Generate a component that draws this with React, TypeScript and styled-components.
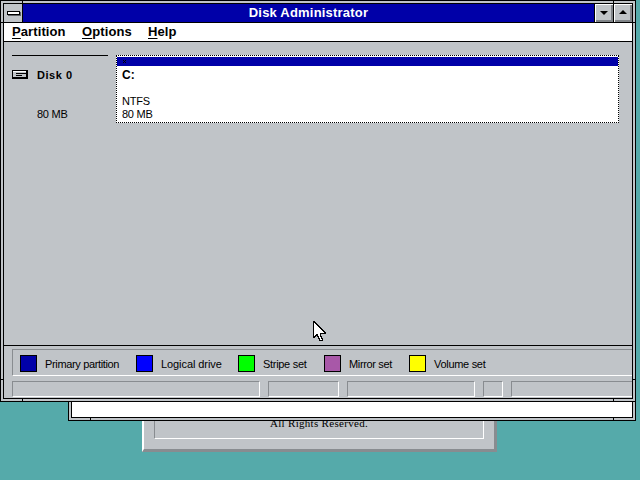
import React from "react";
import styled, { createGlobalStyle } from "styled-components";

const Global = createGlobalStyle`
  html, body { margin: 0; padding: 0; background: #55aaaa; }
  body { font-family: "Liberation Sans", Arial, sans-serif; }
  * { box-sizing: border-box; }
`;

const Desktop = styled.div`
  position: relative;
  width: 640px;
  height: 480px;
  overflow: hidden;
  background: #55aaaa;
`;

const AboutDialog = styled.div`
  position: absolute;
  left: 142px;
  top: 300px;
  width: 355px;
  height: 152px;
  background: #c0c4c8;
  border-left: 2px solid #fff;
  border-top: 2px solid #fff;
  border-right: 3px solid #888c90;
  border-bottom: 3px solid #888c90;
  padding: 10px;
`;

const AboutGroove = styled.div`
  height: 100%;
  border-left: 1px solid #888c90;
  border-top: 1px solid #888c90;
  border-right: 1px solid #fff;
  border-bottom: 1px solid #fff;
  display: flex;
  flex-direction: column;
  justify-content: flex-end;
  align-items: center;
  padding-bottom: 8px;
`;

const AboutText = styled.div`
  font: 11px/13px "Liberation Serif", serif;
  color: #000;
  white-space: nowrap;
  letter-spacing: 0.3px;
`;

const Frame = styled.div<{ $left: number; $top: number; $width: number; $height: number }>`
  position: absolute;
  left: ${(p) => p.$left}px;
  top: ${(p) => p.$top}px;
  width: ${(p) => p.$width}px;
  height: ${(p) => p.$height}px;
  border: 1px solid #000;
  padding: 2px;
  background: #c0c4c8;
`;

const FrameInner = styled.div`
  height: 100%;
  border: 1px solid #000;
  display: flex;
  flex-direction: column;
  background: #c0c4c8;
`;

const Notch = styled.i<{ $x?: number; $r?: number; $y?: number; $b?: number; $horizontal?: boolean }>`
  position: absolute;
  background: #000;
  ${(p) => (p.$x !== undefined ? `left: ${p.$x}px;` : "")}
  ${(p) => (p.$r !== undefined ? `right: ${p.$r}px;` : "")}
  ${(p) => (p.$y !== undefined ? `top: ${p.$y}px;` : "")}
  ${(p) => (p.$b !== undefined ? `bottom: ${p.$b}px;` : "")}
  width: ${(p) => (p.$horizontal ? 3 : 1)}px;
  height: ${(p) => (p.$horizontal ? 1 : 3)}px;
`;

const BackFill = styled.div`
  flex: 1;
  display: flex;
  flex-direction: column;
  justify-content: flex-end;
`;

const BackWhite = styled.div`
  height: 15px;
  background: #fff;
`;

const TitleBar = styled.div`
  height: 19px;
  flex: none;
  display: flex;
  border-bottom: 1px solid #000;
  background: #0000a8;
`;

const SysButton = styled.div`
  width: 19px;
  flex: none;
  background: #c0c4c8;
  border-right: 1px solid #000;
  display: flex;
  align-items: center;
  justify-content: center;
`;

const SysGlyph = styled.span`
  display: block;
  width: 13px;
  height: 4px;
  background: #fff;
  border: 1px solid #000;
  box-shadow: 1px 1px 0 #606468;
`;

const TitleText = styled.div`
  flex: 1;
  color: #fff;
  font-weight: 700;
  font-size: 13px;
  line-height: 18px;
  text-align: center;
  padding-right: 0;
  white-space: nowrap;
  letter-spacing: 0.2px;
`;

const CapButton = styled.div`
  width: 19px;
  flex: none;
  background: #c0c4c8;
  border-left: 1px solid #000;
  display: flex;
  align-items: center;
  justify-content: center;
  box-shadow: inset 1px 1px 0 #fff, inset -1px -1px 0 #808488, inset -2px -2px 0 #808488;
`;

const Arrow = styled.svg<{ $up?: boolean }>`
  display: block;
  margin-top: ${(p) => (p.$up ? -2 : 0)}px;
`;

const MenuBar = styled.div`
  height: 19px;
  flex: none;
  background: #fff;
  border-bottom: 1px solid #000;
  display: flex;
  padding-left: 8px;
  color: #000;
  font-weight: 700;
  font-size: 13px;
  line-height: 18px;
`;

const MenuItem = styled.div<{ $w: number }>`
  width: ${(p) => p.$w}px;
  letter-spacing: 0.1px;
  white-space: nowrap;
  u { text-underline-offset: 2px; }
`;

const Client = styled.div`
  flex: 1;
  min-height: 0;
  display: flex;
  align-items: flex-start;
  gap: 8px;
  padding: 13px 0 0 8px;
  border-bottom: 1px solid #000;
  background: #c0c4c8;
`;

const DiskInfo = styled.div`
  width: 96px;
  height: 68px;
  border-top: 1px solid #000;
  display: flex;
  flex-direction: column;
  font-size: 11px;
  color: #000;
`;

const DiskRow = styled.div`
  display: flex;
  align-items: center;
  gap: 9px;
  margin-top: 12px;
  height: 13px;
  font-weight: 700;
  letter-spacing: 0.55px;
`;

const DiskSize = styled.div`
  margin-top: 27px;
  padding-left: 25px;
  line-height: 13px;
  letter-spacing: -0.25px;
`;

const PartitionBox = styled.div`
  width: 503px;
  height: 68px;
  background: #fff;
  border: 1px dotted #000;
  padding-top: 1px;
  font-size: 11px;
  line-height: 13px;
  color: #000;
`;

const PartitionHeader = styled.div`
  height: 9px;
  background: #0000a8;
  padding: 3px 0 0 6px;
  display: flex;
  align-items: flex-start;
`;

const PartitionName = styled.div`
  font-weight: 700;
  font-size: 12px;
  margin-top: 3px;
  padding-left: 5px;
  height: 26px;
`;

const PartitionLine = styled.div`
  padding-left: 5px;
  letter-spacing: -0.25px;
`;

const StatusArea = styled.div`
  height: 52px;
  flex: none;
  padding: 3px 0 1px 8px;
  display: flex;
  flex-direction: column;
  gap: 5px;
  background: #c0c4c8;
`;

const Legend = styled.div`
  height: 27px;
  flex: none;
  border-top: 1px solid #888c90;
  border-left: 1px solid #888c90;
  border-bottom: 1px solid #fff;
  display: flex;
  align-items: center;
  padding: 2px 0 0 7px;
  font-size: 11px;
  color: #000;
`;

const LegendItem = styled.div<{ $w: number; $sp: number }>`
  width: ${(p) => p.$w}px;
  flex: none;
  display: flex;
  align-items: center;
  gap: 8px;
  white-space: nowrap;
  letter-spacing: ${(p) => p.$sp}px;
`;

const Swatch = styled.span<{ $c: string }>`
  width: 17px;
  height: 17px;
  flex: none;
  background: ${(p) => p.$c};
  border: 1px solid #000;
`;

const StatusBar = styled.div`
  height: 16px;
  flex: none;
  display: flex;
  gap: 8px;
`;

const StatusCell = styled.div<{ $w?: number }>`
  height: 16px;
  ${(p) => (p.$w ? `width: ${p.$w}px; flex: none;` : "flex: 1;")}
  border-top: 1px solid #888c90;
  border-left: 1px solid #888c90;
  border-bottom: 1px solid #fff;
  border-right: 1px solid #fff;
`;

const Open = styled(StatusCell)`
  border-right: none;
`;

const Cursor = styled.svg`
  position: absolute;
  left: 313px;
  top: 321px;
`;

const legend: [string, string, number, number][] = [
  ["#0000a8", "Primary partition", 116, -0.35],
  ["#0000ff", "Logical drive", 102, -0.08],
  ["#00ff00", "Stripe set", 86, -0.3],
  ["#a858a8", "Mirror set", 85, -0.35],
  ["#ffff00", "Volume set", 100, -0.3],
];

export default function App() {
  return (
    <Desktop>
      <Global />
      <AboutDialog>
        <AboutGroove>
          <AboutText>All Rights Reserved.</AboutText>
        </AboutGroove>
      </AboutDialog>

      <Frame $left={68} $top={340} $width={568} $height={81}>
        <FrameInner>
          <BackFill>
            <BackWhite />
          </BackFill>
        </FrameInner>
        <Notch $x={21} $b={0} />
        <Notch $r={21} $b={0} />
      </Frame>

      <Frame $left={0} $top={0} $width={636} $height={402}>
        <FrameInner>
          <TitleBar>
            <SysButton>
              <SysGlyph />
            </SysButton>
            <TitleText>Disk Administrator</TitleText>
            <CapButton>
              <Arrow width="8" height="4" viewBox="0 0 8 4">
                <path d="M0 0h8L4 4z" fill="#000" />
              </Arrow>
            </CapButton>
            <CapButton>
              <Arrow $up width="8" height="4" viewBox="0 0 8 4">
                <path d="M0 4h8L4 0z" fill="#000" />
              </Arrow>
            </CapButton>
          </TitleBar>
          <MenuBar>
            <MenuItem $w={70}>
              <u>P</u>artition
            </MenuItem>
            <MenuItem $w={66}>
              <u>O</u>ptions
            </MenuItem>
            <MenuItem $w={40}>
              <u>H</u>elp
            </MenuItem>
          </MenuBar>
          <Client>
            <DiskInfo>
              <DiskRow>
                <svg width="16" height="9" viewBox="0 0 16 9" shapeRendering="crispEdges">
                  <rect x="0" y="0" width="16" height="9" fill="#000" />
                  <rect x="1" y="1" width="13" height="6" fill="#c0c4c8" />
                  <rect x="1" y="1" width="13" height="1" fill="#fff" />
                  <rect x="4" y="3" width="10" height="1" fill="#000" />
                  <rect x="4" y="5" width="6" height="1" fill="#000" />
                </svg>
                Disk 0
              </DiskRow>
              <DiskSize>80 MB</DiskSize>
            </DiskInfo>
            <PartitionBox>
              <PartitionHeader>
                <svg width="3" height="3" viewBox="0 0 3 3" shapeRendering="crispEdges">
                  <path d="M0 0h1v1H0zM2 0h1v1H2zM1 1h1v1H1zM0 2h1v1H0zM2 2h1v1H2z" fill="#000" />
                </svg>
              </PartitionHeader>
              <PartitionName>C:</PartitionName>
              <PartitionLine>NTFS</PartitionLine>
              <PartitionLine>80 MB</PartitionLine>
            </PartitionBox>
          </Client>
          <StatusArea>
            <Legend>
              {legend.map(([c, t, w, sp]) => (
                <LegendItem key={t} $w={w} $sp={sp}>
                  <Swatch $c={c} />
                  {t}
                </LegendItem>
              ))}
            </Legend>
            <StatusBar>
              <StatusCell $w={248} />
              <StatusCell $w={71} />
              <StatusCell $w={128} />
              <StatusCell $w={20} />
              <Open />
            </StatusBar>
          </StatusArea>
        </FrameInner>
        <Notch $x={21} $y={0} />
        <Notch $r={21} $y={0} />
        <Notch $x={21} $b={0} />
        <Notch $r={21} $b={0} />
        <Notch $x={0} $y={21} $horizontal />
        <Notch $r={0} $y={21} $horizontal />
        <Notch $x={0} $b={21} $horizontal />
        <Notch $r={0} $b={21} $horizontal />
      </Frame>

      <Cursor width="14" height="21" viewBox="0 0 14 21" shapeRendering="crispEdges">
        <path
          d="M0.5 0.5V16.5H1.5V15.5H2.5V14.5H3.5V13.5H4.5V15.5H5.5V17.5H6.5V19.5H9.5V17.5H8.5V15.5H7.5V12.5H12.5V11.5H11.5V10.5H10.5V9.5H9.5V8.5H8.5V7.5H7.5V6.5H6.5V5.5H5.5V4.5H4.5V3.5H3.5V2.5H2.5V1.5H1.5V0.5Z"
          fill="#fff"
          stroke="#000"
          strokeWidth="1"
        />
      </Cursor>
    </Desktop>
  );
}
